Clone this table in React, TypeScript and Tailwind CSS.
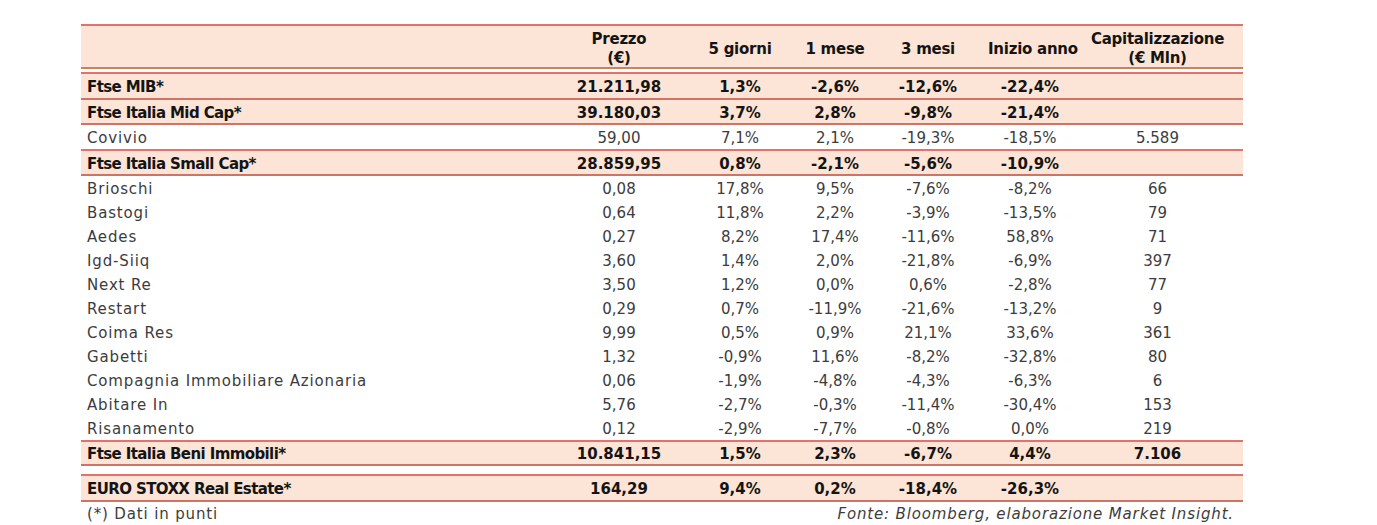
import React from "react";

type Row = { name: string; v: string[]; kind: "idx" | "plain" };

const rows: Row[] = [
  { name: "Ftse MIB*", v: ["21.211,98", "1,3%", "-2,6%", "-12,6%", "-22,4%", ""], kind: "idx" },
  { name: "Ftse Italia Mid Cap*", v: ["39.180,03", "3,7%", "2,8%", "-9,8%", "-21,4%", ""], kind: "idx" },
  { name: "Covivio", v: ["59,00", "7,1%", "2,1%", "-19,3%", "-18,5%", "5.589"], kind: "plain" },
  { name: "Ftse Italia Small Cap*", v: ["28.859,95", "0,8%", "-2,1%", "-5,6%", "-10,9%", ""], kind: "idx" },
  { name: "Brioschi", v: ["0,08", "17,8%", "9,5%", "-7,6%", "-8,2%", "66"], kind: "plain" },
  { name: "Bastogi", v: ["0,64", "11,8%", "2,2%", "-3,9%", "-13,5%", "79"], kind: "plain" },
  { name: "Aedes", v: ["0,27", "8,2%", "17,4%", "-11,6%", "58,8%", "71"], kind: "plain" },
  { name: "Igd-Siiq", v: ["3,60", "1,4%", "2,0%", "-21,8%", "-6,9%", "397"], kind: "plain" },
  { name: "Next Re", v: ["3,50", "1,2%", "0,0%", "0,6%", "-2,8%", "77"], kind: "plain" },
  { name: "Restart", v: ["0,29", "0,7%", "-11,9%", "-21,6%", "-13,2%", "9"], kind: "plain" },
  { name: "Coima Res", v: ["9,99", "0,5%", "0,9%", "21,1%", "33,6%", "361"], kind: "plain" },
  { name: "Gabetti", v: ["1,32", "-0,9%", "11,6%", "-8,2%", "-32,8%", "80"], kind: "plain" },
  { name: "Compagnia Immobiliare Azionaria", v: ["0,06", "-1,9%", "-4,8%", "-4,3%", "-6,3%", "6"], kind: "plain" },
  { name: "Abitare In", v: ["5,76", "-2,7%", "-0,3%", "-11,4%", "-30,4%", "153"], kind: "plain" },
  { name: "Risanamento", v: ["0,12", "-2,9%", "-7,7%", "-0,8%", "0,0%", "219"], kind: "plain" },
];

const beni: Row = { name: "Ftse Italia Beni Immobili*", v: ["10.841,15", "1,5%", "2,3%", "-6,7%", "4,4%", "7.106"], kind: "idx" };
const euro: Row = { name: "EURO STOXX Real Estate*", v: ["164,29", "9,4%", "0,2%", "-18,4%", "-26,3%", ""], kind: "idx" };

const grid = "grid grid-cols-[479px_118px_124px_66px_120px_84px_171px]";

function Cells({ r }: { r: Row }) {
  const idx = r.kind === "idx";
  return (
    <>
      <div className={`pl-[6px] whitespace-nowrap ${idx ? "tracking-[-0.6px]" : "tracking-[0.85px]"}`}>{r.name}</div>
      {r.v.map((x, i) => (
        <div key={i} className="text-center whitespace-nowrap">
          {x}
        </div>
      ))}
    </>
  );
}

function IdxRow({ r, top, h }: { r: Row; top?: boolean; h: string }) {
  return (
    <div
      className={`${grid} ${h} items-center pt-[3px] bg-[#fce4d6] font-bold text-[#141414] border-b-2 border-b-[#cd7466] ${
        top ? "border-t-2 border-t-[#e5716c]" : ""
      }`}
    >
      <Cells r={r} />
    </div>
  );
}

function PlainRow({ r }: { r: Row }) {
  return (
    <div className={`${grid} h-[24px] items-center pt-[3px] bg-white text-[#3c3c3c]`}>
      <Cells r={r} />
    </div>
  );
}

export default function App() {
  return (
    <div
      className="w-[1377px] h-[525px] bg-white pt-[24px] pl-[81px] text-[15px] leading-none"
      style={{ fontFamily: '"DejaVu Sans", sans-serif' }}
    >
      <div className="w-[1162px]">
        <div className="h-[2px] bg-[#e5716c]" />
        <div
          className={`${grid} h-[43px] items-center pt-[4px] bg-[#fce4d6] border-b-2 border-[#c68562] font-bold text-[#141414] leading-[19px] tracking-[-0.25px]`}
        >
          <div />
          <div className="text-center">
            Prezzo
            <br />
            (€)
          </div>
          <div className="text-center whitespace-nowrap">5 giorni</div>
          <div className="text-center whitespace-nowrap">1 mese</div>
          <div className="text-center whitespace-nowrap">3 mesi</div>
          <div className="text-center whitespace-nowrap">Inizio anno</div>
          <div className="text-center whitespace-nowrap">
            Capitalizzazione
            <br />
            (€ Mln)
          </div>
        </div>
        <div className="h-[3px]" />
        <IdxRow r={rows[0]} top h="h-[28px]" />
        <IdxRow r={rows[1]} h="h-[25px]" />
        <PlainRow r={rows[2]} />
        <IdxRow r={rows[3]} top h="h-[27px]" />
        {rows.slice(4).map((r, i) => (
          <PlainRow key={i} r={r} />
        ))}
        <IdxRow r={beni} top h="h-[26px]" />
        <div className="h-[8px]" />
        <IdxRow r={euro} top h="h-[28px]" />
        <div className="flex justify-between items-center h-[23px] pt-[2px] text-[#3c3c3c] tracking-[0.85px]">
          <span className="pl-[6px]">(*) Dati in punti</span>
          <span className="italic pr-[9px]">Fonte: Bloomberg, elaborazione Market Insight.</span>
        </div>
      </div>
    </div>
  );
}
